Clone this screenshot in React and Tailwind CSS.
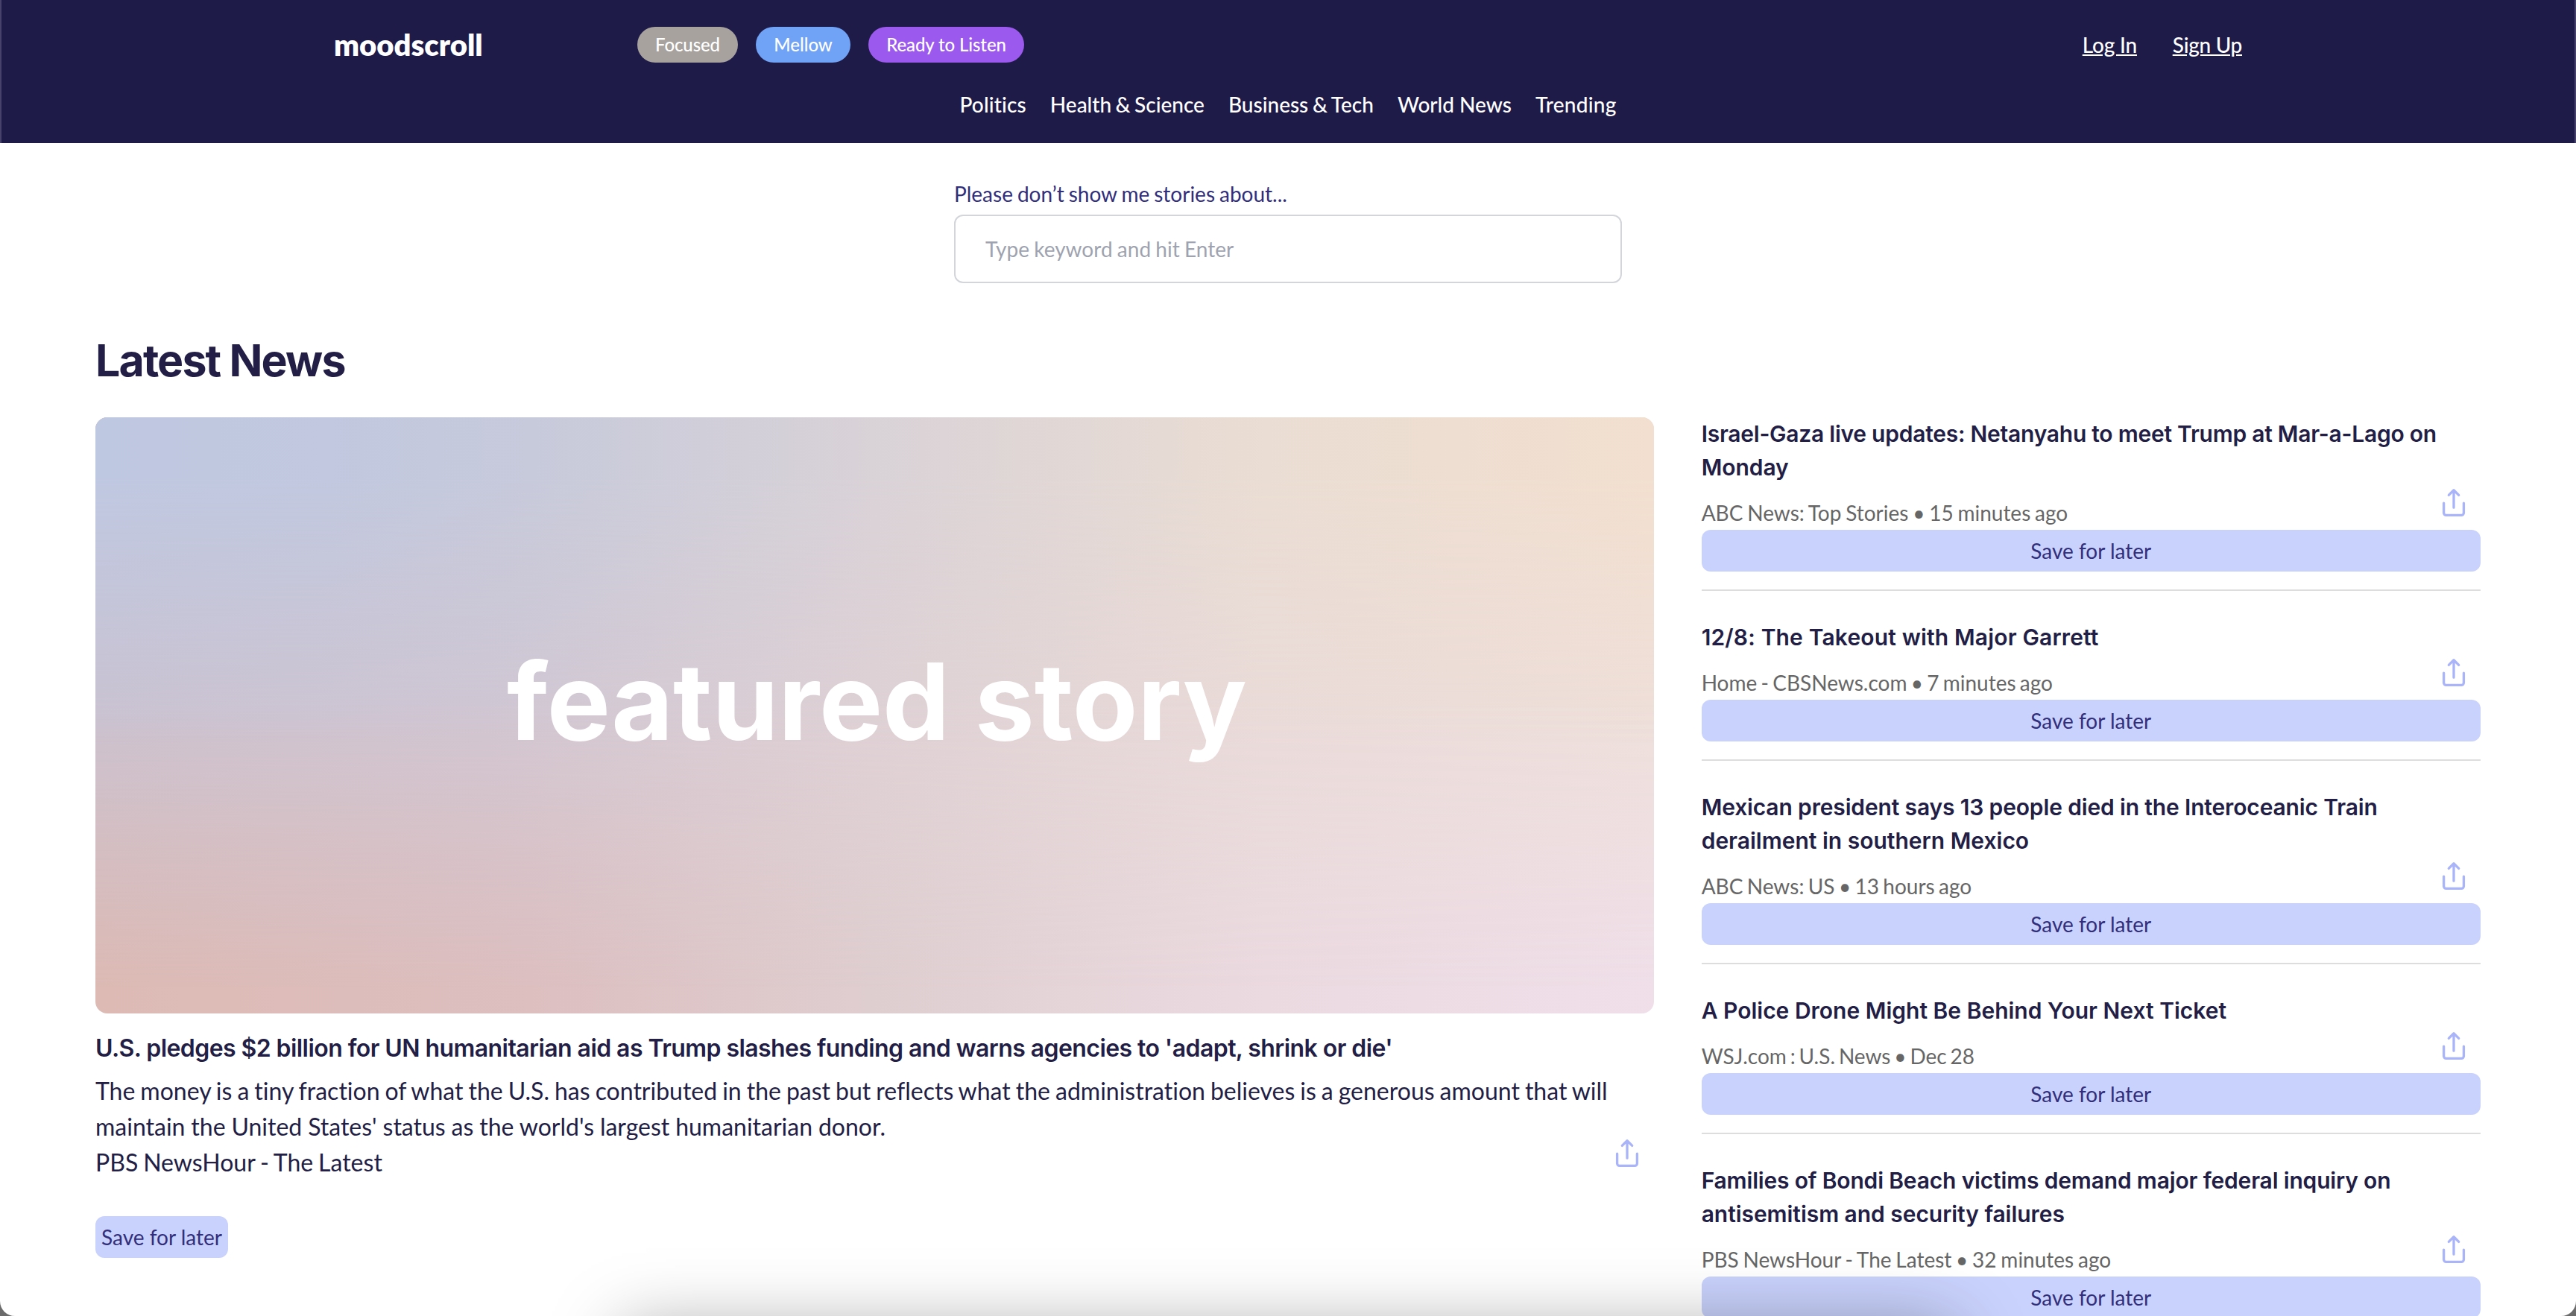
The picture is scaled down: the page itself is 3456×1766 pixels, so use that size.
const MOODS = [
  { label: "Focused", style: "w-[135px] bg-[#a7a29e] tracking-[-0.1px]" },
  { label: "Mellow", style: "w-[127px] bg-[#70a3f5]" },
  { label: "Ready to Listen", style: "w-[209px] bg-[#9b59ee] tracking-[-0.1px]" },
];

const SECTIONS = [
  { label: "Politics", style: "tracking-[0.15px]" },
  { label: "Health & Science", style: "[word-spacing:-1.6px]" },
  { label: "Business & Tech", style: "[word-spacing:-1.4px]" },
  { label: "World News", style: "" },
  { label: "Trending", style: "tracking-[0.25px]" },
];

const STORIES = [
  {
    lines: [
      ["Israel-Gaza live updates: Netanyahu to meet Trump at Mar-a-Lago on", "tracking-[-0.25px]"],
      ["Monday", "tracking-[-0.07px]"],
    ],
    meta: "ABC News: Top Stories • 15 minutes ago",
    metaStyle: "[word-spacing:-1.4px]",
  },
  {
    lines: [["12/8: The Takeout with Major Garrett", "tracking-[0.15px]"]],
    meta: "Home - CBSNews.com • 7 minutes ago",
    metaStyle: "[word-spacing:-1.9px]",
  },
  {
    lines: [
      ["Mexican president says 13 people died in the Interoceanic Train", "tracking-[-0.15px]"],
      ["derailment in southern Mexico", ""],
    ],
    meta: "ABC News: US • 13 hours ago",
    metaStyle: "[word-spacing:-1.8px]",
  },
  {
    lines: [["A Police Drone Might Be Behind Your Next Ticket", ""]],
    meta: "WSJ.com : U.S. News • Dec 28",
    metaStyle: "[word-spacing:-2.3px]",
  },
  {
    lines: [
      ["Families of Bondi Beach victims demand major federal inquiry on", "tracking-[-0.17px]"],
      ["antisemitism and security failures", "tracking-[-0.05px]"],
    ],
    meta: "PBS NewsHour - The Latest • 32 minutes ago",
    metaStyle: "[word-spacing:-1.4px]",
  },
];

function ShareIcon({ className }) {
  return (
    <svg
      viewBox="0 0 40 40"
      fill="none"
      stroke="#a9b4f9"
      strokeWidth="3.3"
      strokeLinecap="round"
      strokeLinejoin="round"
      className={`size-10 shrink-0 ${className}`}
    >
      <path d="M6.6 21.2V34.2a3.2 3.2 0 0 0 3.2 3.2H30.2a3.2 3.2 0 0 0 3.2-3.2V21.2" />
      <path d="M20 27.2V3.8M13.3 10.4 20 3.8l6.7 6.6" />
    </svg>
  );
}

function SaveButton({ className }) {
  return (
    <button
      className={`h-14 rounded-xl bg-[#c9d2fc] text-center text-[28px] leading-[54px] text-[#312e7b] ${className}`}
    >
      Save for later
    </button>
  );
}

function Header() {
  return (
    <header className="h-[192px] border-x-2 border-[#46426b] bg-[#1f1b49] pt-9 text-white">
      <div className="mx-auto flex h-12 w-[2560px] items-center">
        <div className="w-[407px] text-[40px] leading-[48px] font-extrabold">moodscroll</div>
        <div className="flex gap-6">
          {MOODS.map((m) => (
            <button
              key={m.label}
              className={`h-12 rounded-full text-center text-2xl leading-[48px] font-medium whitespace-nowrap ${m.style}`}
            >
              {m.label}
            </button>
          ))}
        </div>
        <div className="ml-auto flex gap-12 text-[28px] leading-[44px] font-medium underline">
          <a className="tracking-[-0.24px]">Log In</a>
          <a className="tracking-[-0.3px]">Sign Up</a>
        </div>
      </div>
      <nav className="mt-[35px] flex justify-center gap-8 text-[28px] leading-[42px] font-medium">
        {SECTIONS.map((s) => (
          <a key={s.label} className={s.style}>
            {s.label}
          </a>
        ))}
      </nav>
    </header>
  );
}

function Filter() {
  return (
    <div className="mx-auto mt-[47px] w-[896px]">
      <label className="block text-[28px] leading-[42px] text-[#312e7b] [word-spacing:-1.2px]">
        Please don’t show me stories about...
      </label>
      <input
        placeholder="Type keyword and hit Enter"
        className="mt-[7px] block h-[92px] w-full rounded-xl border-2 border-[#d3d5da] px-10 text-[28px] [word-spacing:-0.9px] placeholder:text-[#9ea3af]"
      />
    </div>
  );
}

function FeatureArt() {
  return (
    <div className="relative flex h-[800px] items-center justify-center overflow-hidden rounded-2xl bg-[linear-gradient(to_right,#ddbab4,#ddbfc0_28%,#dfced0_50%,#ebdae0_75%,#f0dfe9)] pb-10">
      <div className="absolute inset-0 bg-[linear-gradient(to_right,#cbc2d0,#d1c6d2_25%,#dfd1d5_50%,#eadbd9_75%,#eedfda)] [mask-image:linear-gradient(to_bottom,black_48%,transparent_96%)]" />
      <div className="absolute inset-0 bg-[linear-gradient(to_right,#bfc8e1,#c1c8df_15%,#c7cadb_28%,#d9d2d7_50%,#eaddd3_75%,#f2dfcf)] [mask-image:linear-gradient(to_bottom,black_10%,transparent_55%)]" />
      <span className="relative pl-1.5 font-['Inter',sans-serif] text-[143px] leading-none font-bold tracking-[-0.1px] whitespace-nowrap text-white">
        featured story
      </span>
    </div>
  );
}

function Featured() {
  return (
    <article>
      <FeatureArt />
      <h2 className="mt-[23px] mb-[9px] font-['Inter',sans-serif] text-[32px] leading-[48px] font-semibold tracking-[-0.57px]">
        U.S. pledges $2 billion for UN humanitarian aid as Trump slashes funding and warns agencies to 'adapt, shrink or die'
      </h2>
      <p className="text-[32px] leading-[48px] whitespace-nowrap">
        <span className="block [word-spacing:-1.2px]">
          The money is a tiny fraction of what the U.S. has contributed in the past but reflects what the administration
          believes is a generous amount that will
        </span>
        <span className="block [word-spacing:-0.3px]">
          maintain the United States' status as the world's largest humanitarian donor.
        </span>
      </p>
      <div className="flex h-12 items-start justify-between pr-4">
        <span className="text-[32px] leading-[48px] [word-spacing:-1.3px]">PBS NewsHour - The Latest</span>
        <ShareIcon className="-mt-[9px]" />
      </div>
      <SaveButton className="mt-12 w-[178px]" />
    </article>
  );
}

function Story({ lines, meta, metaStyle }) {
  return (
    <article className="border-b-2 border-[#dddddd] pb-6">
      <h3 className="font-['Inter',sans-serif] text-[30px] leading-[45px] font-semibold">
        {lines.map(([text, style]) => (
          <span key={text} className={`block whitespace-nowrap ${style}`}>
            {text}
          </span>
        ))}
      </h3>
      <div className="flex h-[61px] items-start justify-between pr-4">
        <span className={`mt-[17px] text-[28px] leading-[42px] text-[#666666] ${metaStyle}`}>{meta}</span>
        <ShareIcon className="mt-1" />
      </div>
      <SaveButton className="block w-full" />
    </article>
  );
}

export default function App() {
  return (
    <div className="h-[1766px] overflow-hidden bg-[#6b6b6b] font-['Lato',sans-serif] [font-variant-ligatures:none]">
      <div className="relative h-full overflow-hidden rounded-b-[20px] bg-white text-[#221e45]">
        <Header />
        <Filter />
        <main className="mt-[68px] px-32">
          <h1 className="mb-10 font-['Inter',sans-serif] text-[59px] leading-[72px] font-bold tracking-[-1.85px]">
            Latest News
          </h1>
          <div className="grid grid-cols-[2fr_1fr] gap-16">
            <Featured />
            <div className="flex min-w-0 flex-col gap-10">
              {STORIES.map((s) => (
                <Story key={s.meta} {...s} />
              ))}
            </div>
          </div>
        </main>
        {/* soft shadow rising from the bottom edge */}
        <div className="pointer-events-none absolute top-[1784px] left-[835px] h-[300px] w-[1785px] shadow-[0_0_90px_rgba(0,0,0,0.36)]" />
      </div>
    </div>
  );
}
